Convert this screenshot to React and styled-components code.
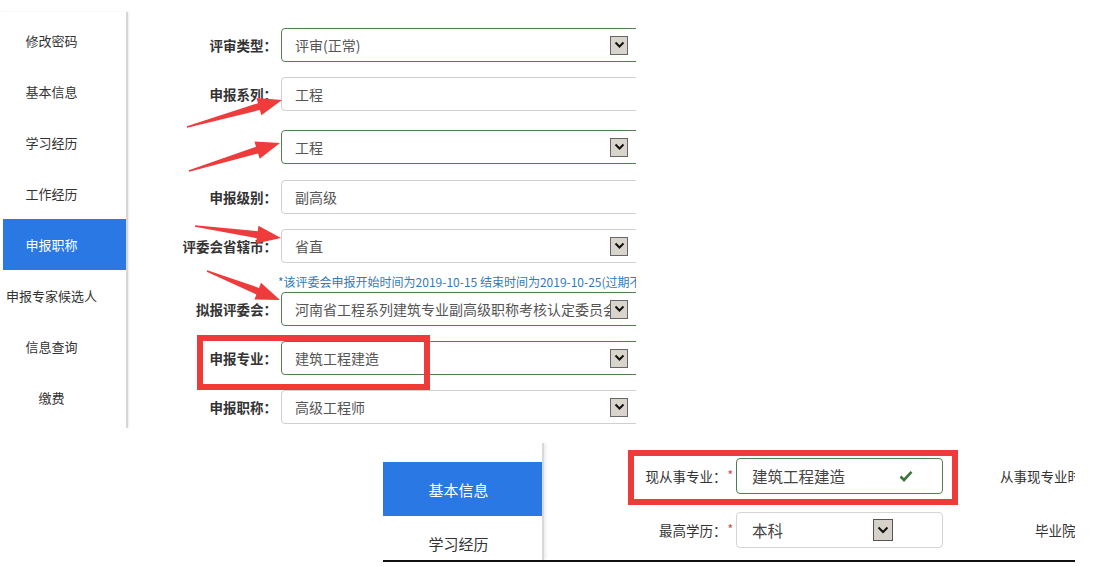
import React from 'react'
import styled, { createGlobalStyle } from 'styled-components'

const GlobalStyle = createGlobalStyle`
    body {
        margin: 0;
        background: #fff;
        font-family: "Noto Sans CJK SC", "Noto Sans", sans-serif;
    }
`

const topMenu = ['修改密码', '基本信息', '学习经历', '工作经历', '申报职称', '申报专家候选人', '信息查询', '缴费']

const arrows = [
    [187, 127, 282, 100],
    [189, 171, 280, 143],
    [195, 226, 281, 238],
    [207, 271, 280, 300],
]

function arrowPoints([x1, y1, x2, y2]) {
    const dx = x2 - x1
    const dy = y2 - y1
    const len = Math.hypot(dx, dy)
    const ux = dx / len
    const uy = dy / len
    const nx = -uy
    const ny = ux
    const bx = x2 - ux * 24
    const by = y2 - uy * 24
    const p = (x, y, w) => `${x + nx * w},${y + ny * w}`
    return [
        p(x1, y1, 0.8),
        p(bx, by, 3.5),
        p(bx, by, 9),
        `${x2},${y2}`,
        p(bx, by, -9),
        p(bx, by, -3.5),
        p(x1, y1, -0.8),
    ].join(' ')
}

function Chevron() {
    return (
        <DropBox>
            <svg width="11" height="8" viewBox="0 0 11 8">
                <polyline points="1.5,1.5 5.5,5.5 9.5,1.5" fill="none" stroke="#111" strokeWidth="2" />
            </svg>
        </DropBox>
    )
}

function FormRow({ label, value, select, success, top }) {
    return (
        <Row $top={top}>
            <Label>{label}</Label>
            <Field $success={success}>
                <FieldText>{value}</FieldText>
                {select && <Chevron />}
            </Field>
        </Row>
    )
}

function App() {
    return (
        <Page>
            <GlobalStyle />
            <TopPanel>
                <SideMenu>
                    {topMenu.map((item) => (
                        <MenuItem key={item} $active={item === '申报职称'}>{item}</MenuItem>
                    ))}
                </SideMenu>
                <FormArea>
                    <FormRow label="评审类型：" value="评审(正常)" select success />
                    <FormRow label="申报系列：" value="工程" />
                    <FormRow label="" value="工程" select success top={19} />
                    <FormRow label="申报级别：" value="副高级" top={16} />
                    <FormRow label="评委会省辖市：" value="省直" select />
                    <Hint>*该评委会申报开始时间为2019-10-15 结束时间为2019-10-25(过期不可申报)</Hint>
                    <FormRow label="拟报评委会：" value="河南省工程系列建筑专业副高级职称考核认定委员会" select success top={2} />
                    <FormRow label="申报专业：" value="建筑工程建造" select success />
                    <FormRow label="申报职称：" value="高级工程师" select />
                </FormArea>
                <Marks width="636" height="428">
                    {arrows.map((a, i) => (
                        <polygon key={i} points={arrowPoints(a)} fill="#ee3b3b" />
                    ))}
                </Marks>
                <RedBox style={{ left: 197, top: 335, width: 233, height: 55 }} />
            </TopPanel>

            <BottomPanel>
                <BottomMenu>
                    <BottomItem $active>基本信息</BottomItem>
                    <BottomItem>学习经历</BottomItem>
                </BottomMenu>
                <BottomForm>
                    <BottomRow>
                        <SmallLabel>现从事专业：<Star>*</Star></SmallLabel>
                        <SmallField $success>
                            <SmallText>建筑工程建造</SmallText>
                            <Check viewBox="0 0 14 12" width="14" height="12">
                                <path d="M1.5 6.5 L5 10 L12.5 1.8" fill="none" stroke="#3c763d" strokeWidth="2.6" />
                            </Check>
                        </SmallField>
                        <SideLabel>从事现专业时间：</SideLabel>
                    </BottomRow>
                    <BottomRow>
                        <SmallLabel>最高学历：<Star>*</Star></SmallLabel>
                        <SmallField>
                            <SmallText>本科</SmallText>
                            <BigDrop>
                                <svg width="12" height="8" viewBox="0 0 12 8">
                                    <polyline points="1.5,1.5 6,6 10.5,1.5" fill="none" stroke="#111" strokeWidth="2" />
                                </svg>
                            </BigDrop>
                        </SmallField>
                        <SideLabel $indent>毕业院校：</SideLabel>
                    </BottomRow>
                </BottomForm>
                <RedBox style={{ left: 245, top: 7, width: 330, height: 55 }} />
            </BottomPanel>
        </Page>
    )
}

const Page = styled.div`
    position: relative;
    width: 1098px;
    height: 567px;
    overflow: hidden;
    background: #fff;
`

const TopPanel = styled.div`
    position: relative;
    display: flex;
    width: 636px;
    height: 428px;
    overflow: hidden;
`

const SideMenu = styled.div`
    flex: none;
    width: 123px;
    margin-top: 12px;
    padding: 3px 0 0 3px;
    border-right: 2px solid #d6d6d6;
    box-shadow: 1px 0 2px rgba(0, 0, 0, 0.08);
`

const MenuItem = styled.div`
    height: 51px;
    display: flex;
    align-items: center;
    justify-content: center;
    padding-right: 26px;
    font-size: 13px;
    color: ${(p) => (p.$active ? '#fff' : '#333')};
    background: ${(p) => (p.$active ? '#2a78e4' : 'transparent')};
    white-space: nowrap;
`

const FormArea = styled.div`
    flex: 1;
    padding-top: 28px;
    overflow: hidden;
`

const Row = styled.div`
    display: flex;
    align-items: center;
    margin-top: ${(p) => (p.$top != null ? p.$top : 15)}px;
    &:first-child {
        margin-top: 0;
    }
`

const Label = styled.div`
    width: 149px;
    flex: none;
    text-align: right;
    font-size: 13.5px;
    font-weight: bold;
    color: #333;
    margin-right: 4px;
    white-space: nowrap;
`

const Field = styled.div`
    flex: none;
    width: 360px;
    height: 34px;
    box-sizing: border-box;
    display: flex;
    align-items: center;
    padding-left: 13px;
    border: 1px solid ${(p) => (p.$success ? '#4f7f4f' : '#cfcfcf')};
    border-radius: 4px;
`

const FieldText = styled.div`
    flex: 1;
    min-width: 0;
    overflow: hidden;
    white-space: nowrap;
    font-size: 14px;
    color: #555;
`

const DropBox = styled.div`
    flex: none;
    width: 18px;
    height: 19px;
    margin-right: 12px;
    box-sizing: border-box;
    border: 1px solid #666;
    background: #d9d5cd;
    display: flex;
    align-items: center;
    justify-content: center;
`

const Hint = styled.div`
    margin: 11px 0 0 150px;
    font-size: 12px;
    line-height: 16px;
    color: #2f7bbd;
    white-space: nowrap;
`

const Marks = styled.svg`
    position: absolute;
    left: 0;
    top: 0;
    pointer-events: none;
`

const RedBox = styled.div`
    position: absolute;
    box-sizing: border-box;
    border: 6px solid #ef3a3a;
    pointer-events: none;
`

const BottomPanel = styled.div`
    position: relative;
    display: flex;
    margin: 15px 0 0 383px;
    width: 692px;
    height: 117px;
    border-bottom: 2px solid #111;
    overflow: hidden;
`

const BottomMenu = styled.div`
    flex: none;
    width: 159px;
    padding-top: 19px;
    border-right: 2px solid #d9d9d9;
    box-shadow: 2px 0 3px rgba(0, 0, 0, 0.08);
`

const BottomItem = styled.div`
    height: 54px;
    display: flex;
    align-items: center;
    justify-content: center;
    padding-right: 8px;
    font-size: 15px;
    color: ${(p) => (p.$active ? '#fff' : '#333')};
    background: ${(p) => (p.$active ? '#2a78e4' : 'transparent')};
`

const BottomForm = styled.div`
    flex: none;
    width: 560px;
    padding-top: 15px;
`

const BottomRow = styled.div`
    display: flex;
    align-items: center;
    margin-bottom: 18px;
`

const SmallLabel = styled.div`
    width: 192px;
    flex: none;
    text-align: right;
    font-size: 13.5px;
    color: #333;
    white-space: nowrap;
`

const Star = styled.span`
    color: #e23b3b;
    margin: 0 3px 0 1px;
    vertical-align: top;
    font-size: 12px;
`

const SmallField = styled.div`
    flex: none;
    width: 207px;
    height: 36px;
    box-sizing: border-box;
    display: flex;
    align-items: center;
    padding-left: 15px;
    border: 1px solid ${(p) => (p.$success ? '#4f7f4f' : '#d4d4d4')};
    border-radius: 4px;
`

const SmallText = styled.div`
    flex: 1;
    font-size: 15.5px;
    color: #444;
    white-space: nowrap;
`

const Check = styled.svg`
    margin-right: 29px;
`

const BigDrop = styled.div`
    flex: none;
    width: 20px;
    height: 22px;
    margin-right: 49px;
    box-sizing: border-box;
    border: 1px solid #555;
    background: #d6d2ca;
    display: flex;
    align-items: center;
    justify-content: center;
`

const SideLabel = styled.div`
    flex: none;
    margin-left: ${(p) => (p.$indent ? 92 : 57)}px;
    font-size: 13.5px;
    color: #333;
    white-space: nowrap;
`

export default App
